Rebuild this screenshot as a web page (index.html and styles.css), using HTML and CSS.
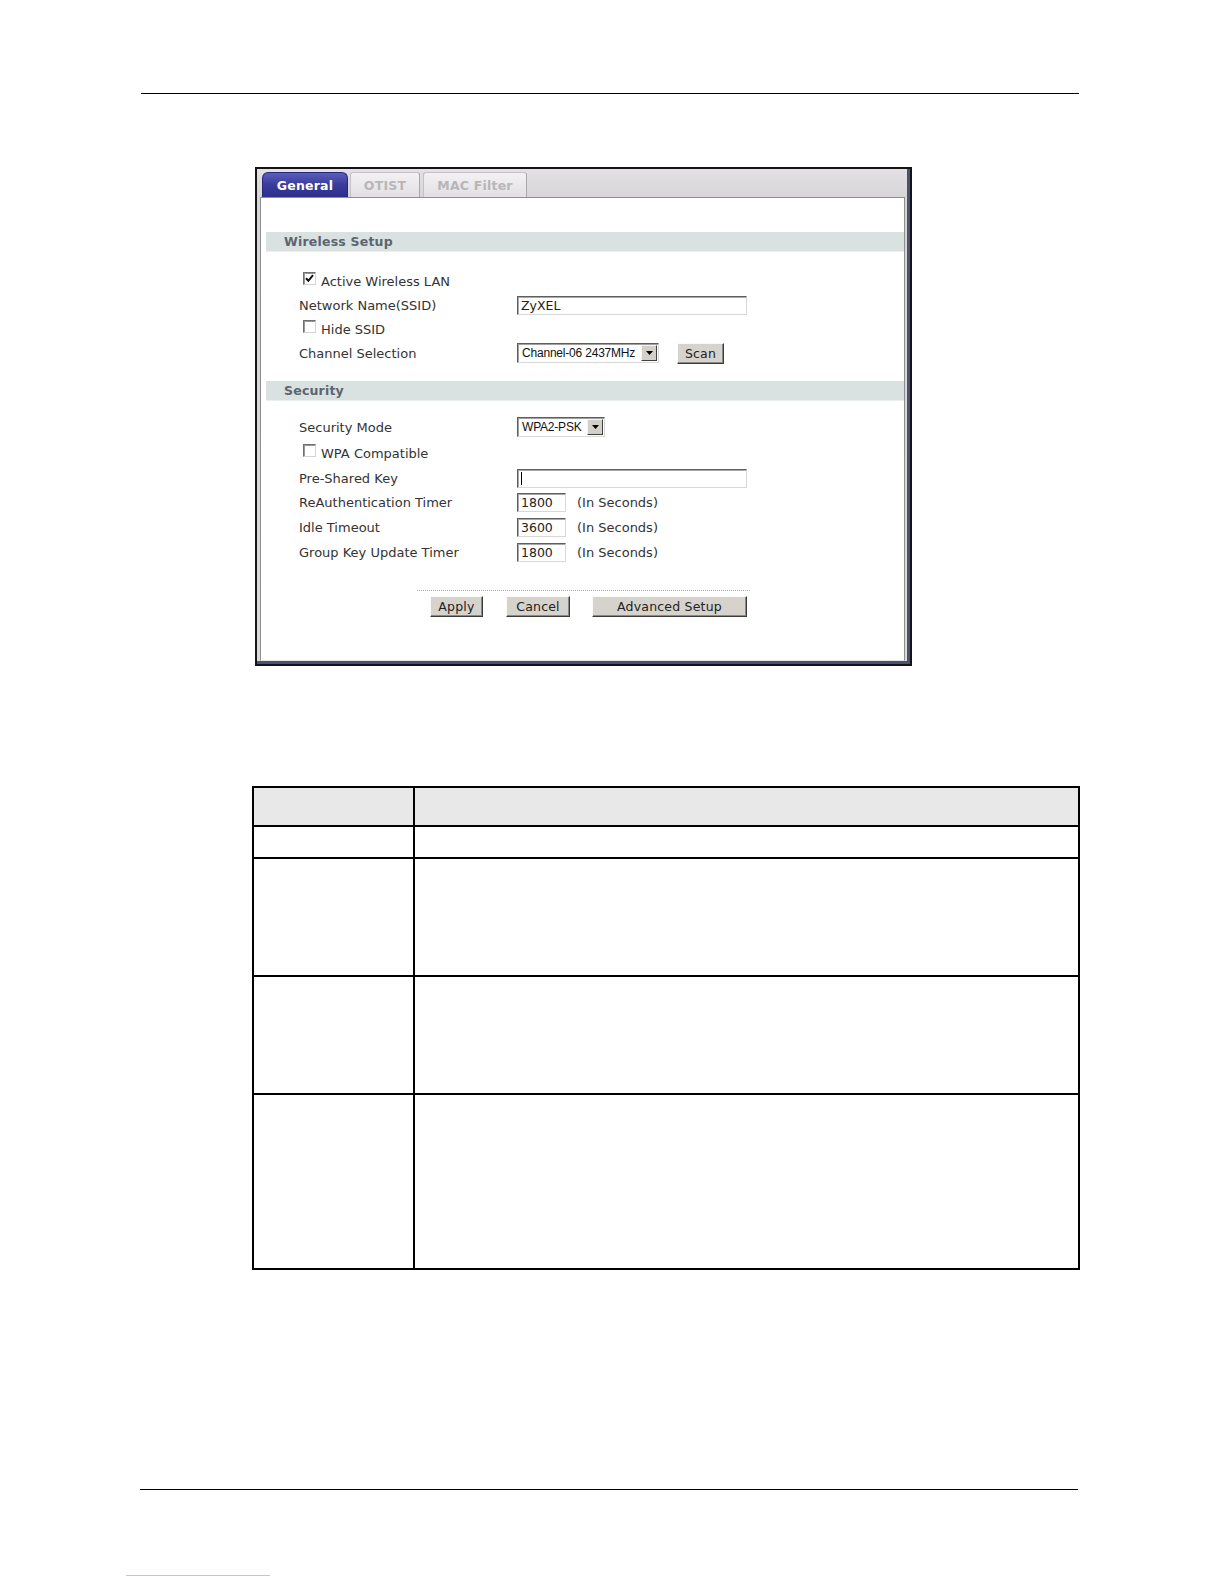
FILE: index.html
```html
<!DOCTYPE html>
<html>
<head>
<meta charset="utf-8">
<title>Wireless General</title>
<link rel="stylesheet" href="styles.css">
</head>
<body>
<div class="page">
  <div class="rule-top"></div>

  <div class="shot">
    <div class="win">
      <div class="tabs">
        <div class="tab tab-active tab-general">General</div>
        <div class="tab tab-otist">OTIST</div>
        <div class="tab tab-mac">MAC Filter</div>
      </div>
      <div class="panel">
        <div class="band band-wireless">Wireless Setup</div>
        <div class="rows rows-wireless">
          <div class="row row-cb">
            <span class="cb"><svg width="9" height="9" viewBox="0 0 9 9"><path d="M1 4.2 L3.4 6.8 L8 1.2" fill="none" stroke="#111" stroke-width="2"/></svg></span>
            <span class="cb-label">Active Wireless LAN</span>
          </div>
          <div class="row">
            <span class="label">Network Name(SSID)</span>
            <span class="input input-wide">ZyXEL</span>
          </div>
          <div class="row row-cb">
            <span class="cb"></span>
            <span class="cb-label">Hide SSID</span>
          </div>
          <div class="row">
            <span class="label">Channel Selection</span>
            <span class="select select-channel"><span class="sel-text">Channel-06 2437MHz</span><span class="sel-btn"><svg width="7" height="4" viewBox="0 0 7 4"><path d="M0 0 H7 L3.5 4 Z" fill="#000"/></svg></span></span>
            <span class="btn btn-scan">Scan</span>
          </div>
        </div>

        <div class="band band-security">Security</div>
        <div class="rows rows-security">
          <div class="row row-h26">
            <span class="label">Security Mode</span>
            <span class="select select-mode"><span class="sel-text">WPA2-PSK</span><span class="sel-btn"><svg width="7" height="4" viewBox="0 0 7 4"><path d="M0 0 H7 L3.5 4 Z" fill="#000"/></svg></span></span>
          </div>
          <div class="row row-h26 row-cb">
            <span class="cb"></span>
            <span class="cb-label">WPA Compatible</span>
          </div>
          <div class="row row-h24">
            <span class="label">Pre-Shared Key</span>
            <span class="input input-wide"><span class="caret"></span></span>
          </div>
          <div class="row row-h25">
            <span class="label">ReAuthentication Timer</span>
            <span class="input input-small">1800</span>
            <span class="unit">(In Seconds)</span>
          </div>
          <div class="row row-h25">
            <span class="label">Idle Timeout</span>
            <span class="input input-small">3600</span>
            <span class="unit">(In Seconds)</span>
          </div>
          <div class="row row-h25">
            <span class="label">Group Key Update Timer</span>
            <span class="input input-small">1800</span>
            <span class="unit">(In Seconds)</span>
          </div>
        </div>

        <div class="dotted"></div>
        <div class="buttons">
          <span class="btn btn-apply">Apply</span>
          <span class="btn btn-cancel">Cancel</span>
          <span class="btn btn-adv">Advanced Setup</span>
        </div>
      </div>
    </div>
  </div>

  <div class="grid">
    <div class="cell cell-head"></div>
    <div class="cell cell-head"></div>
    <div class="cell"></div>
    <div class="cell"></div>
    <div class="cell"></div>
    <div class="cell"></div>
    <div class="cell"></div>
    <div class="cell"></div>
    <div class="cell"></div>
    <div class="cell"></div>
  </div>

  <div class="rule-bottom"></div>
  <div class="footer-link"></div>
</div>
</body>
</html>
```

FILE: styles.css
```css
html, body {
  margin: 0;
  padding: 0;
  background: #fff;
}

.page {
  width: 1224px;
  height: 1584px;
  overflow: hidden;
  font-family: "DejaVu Sans", Verdana, sans-serif;
}

.rule-top {
  margin: 93px 0 0 141px;
  width: 938px;
  height: 0;
  border-top: 1px solid #000;
}

/* ---------- screenshot frame ---------- */
.shot {
  margin: 73px 0 0 255px;
  width: 657px;
  height: 499px;
  box-sizing: border-box;
  border: 2px solid #141414;
}

.win {
  height: 100%;
  box-sizing: border-box;
  display: flex;
  flex-direction: column;
  padding: 3px 2px 0 3px;
  background: linear-gradient(#e3e1e3, #d7d5d7 28px, #dcdadc);
  border-right: 3px solid #4b5175;
  border-bottom: 3px solid #4b5175;
}

.tabs {
  display: flex;
  height: 25px;
  padding-left: 2px;
  flex: none;
}

.tab {
  box-sizing: border-box;
  height: 25px;
  display: flex;
  align-items: center;
  justify-content: center;
  font-weight: bold;
  font-size: 12.5px;
  color: #b8b6b8;
  background: linear-gradient(#f3f1f3, #e2e0e2);
  border: 1px solid #c3c1c3;
  border-bottom: none;
  border-right-color: #a9a7a9;
  border-radius: 3px 3px 0 0;
  letter-spacing: 0.2px;
}

.tab-active {
  color: #fff;
  background: linear-gradient(#5b5dbb, #3a3c9c 50%, #2d2f8c);
  border-color: #26287a;
  border-radius: 6px 6px 0 0;
}

.tab-general { width: 86px; }
.tab-otist { width: 70px; margin-left: 2px; }
.tab-mac { width: 104px; margin-left: 3px; }

.panel {
  flex: 1;
  background: #fff;
  border: 1px solid #8e8e8e;
  border-bottom-color: #e6e6e6;
}

.band {
  margin-left: 5px;
  height: 20px;
  box-sizing: border-box;
  padding-left: 18px;
  display: flex;
  align-items: center;
  background: #d9e1e1;
  border-bottom: 1px solid #eaefef;
  color: #5b6570;
  font-weight: bold;
  font-size: 12.5px;
  letter-spacing: 0.2px;
}

.band-wireless { margin-top: 34px; }
.band-security { margin-top: 16px; }

.rows-wireless { margin-top: 17px; }
.rows-security { margin-top: 13px; }

.row {
  height: 24px;
  display: flex;
  align-items: center;
  padding-left: 38px;
  font-size: 13px;
  color: #333;
}

.row-h24 { height: 24px; }
.row-h25 { height: 25px; }
.row-h26 { height: 26px; }

.row-cb { padding-left: 42px; }

.label {
  width: 218px;
  flex: none;
}

.cb {
  width: 13px;
  height: 13px;
  box-sizing: border-box;
  background: #fff;
  border: 1px solid;
  border-color: #6e6e6e #d4d4d4 #d4d4d4 #6e6e6e;
  box-shadow: inset 1px 1px #9a9a9a;
  display: flex;
  align-items: center;
  justify-content: center;
  margin-top: -6px;
}

.cb-label {
  margin-left: 5px;
}

.input {
  box-sizing: border-box;
  height: 19px;
  background: #fff;
  border: 1px solid;
  border-color: #5e5e5e #d8d8d8 #d8d8d8 #5e5e5e;
  box-shadow: inset 1px 1px #a8a8a8;
  display: flex;
  align-items: center;
  padding-left: 3px;
  font-size: 12.5px;
  color: #222;
}

.input-wide { width: 230px; }
.input-small { width: 49px; }

.caret {
  width: 1px;
  height: 13px;
  background: #000;
}

.unit {
  margin-left: 11px;
}

.select {
  box-sizing: border-box;
  height: 20px;
  display: flex;
  align-items: center;
  background: #fff;
  border: 1px solid;
  border-color: #5e5e5e #d8d8d8 #d8d8d8 #5e5e5e;
  box-shadow: inset 1px 1px #a0a0a0;
  font-family: "Liberation Sans", Arial, sans-serif;
  font-size: 12px;
  color: #111;
}

.select-channel { width: 142px; }
.select-mode { width: 88px; }

.sel-text {
  flex: 1;
  padding-left: 4px;
  white-space: nowrap;
  letter-spacing: -0.2px;
}

.sel-btn {
  width: 16px;
  height: 16px;
  box-sizing: border-box;
  margin-right: 1px;
  background: #d4d0c8;
  border: 1px solid;
  border-color: #f4f4f4 #404040 #404040 #f4f4f4;
  display: flex;
  align-items: center;
  justify-content: center;
}

.btn {
  box-sizing: border-box;
  height: 21px;
  display: inline-flex;
  align-items: center;
  justify-content: center;
  background: #d6d3cc;
  border: 1px solid;
  border-color: #fafafa #3a3a3a #3a3a3a #fafafa;
  box-shadow: inset -1px -1px #8a8a8a;
  font-size: 12.5px;
  color: #222;
  letter-spacing: 0.2px;
}

.btn-scan {
  width: 47px;
  margin-left: 18px;
}

.dotted {
  margin: 25px 0 0 156px;
  width: 333px;
  height: 0;
  border-top: 1px dotted #a9a9a9;
}

.buttons {
  display: flex;
  margin: 5px 0 0 169px;
}

.btn-apply { width: 53px; }
.btn-cancel { width: 64px; margin-left: 23px; }
.btn-adv { width: 155px; margin-left: 22px; }

/* ---------- table ---------- */
.grid {
  margin: 120px 0 0 252px;
  width: 828px;
  box-sizing: border-box;
  display: grid;
  grid-template-columns: 161px 1fr;
  grid-template-rows: 39px 32px 118px 118px 175px;
  border-top: 2px solid #000;
  border-left: 2px solid #000;
}

.cell {
  border-right: 2px solid #000;
  border-bottom: 2px solid #000;
}

.cell-head {
  background: #e8e8e8;
}

.rule-bottom {
  margin: 219px 0 0 140px;
  width: 938px;
  height: 0;
  border-top: 1px solid #000;
}

.footer-link {
  margin: 85px 0 0 126px;
  width: 144px;
  height: 0;
  border-top: 1px solid #b9c6e6;
}
```
